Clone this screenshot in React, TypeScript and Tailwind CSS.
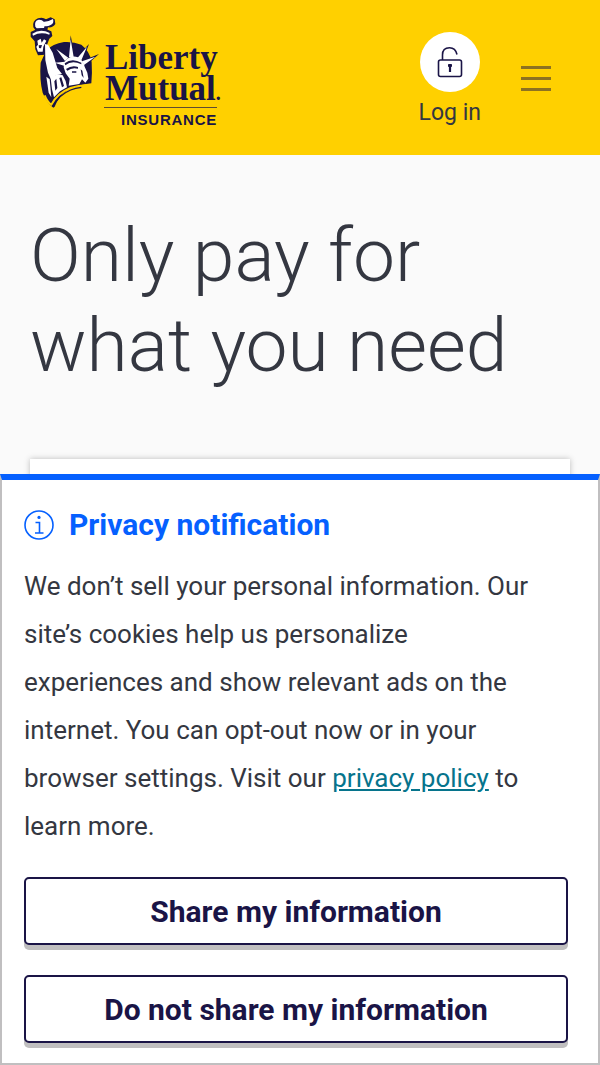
import React from 'react'

function StatueMark() {
  return (
    <svg viewBox="27 20 216 279" className="h-[93px] w-[72px] shrink-0" aria-hidden="true">
      {/* oval backdrop */}
      <path
        d="M78 124 Q98 103 132 98 Q160 96 184 106 Q210 126 215 158 Q217 190 214 222 Q172 226 142 243 Q116 262 104 292 L100 295 Q80 280 68 250 Q58 210 62 160 Z"
        fill="#1a1446"
      />
      {/* flame */}
      <path d="M40 54 Q36 34 54 27 Q68 22 78 30 L92 24 L104 30 L106 44 Q98 56 84 54 L82 62 L46 62 Z" fill="#1a1446" />
      <path d="M46 52 Q42 34 56 31 Q66 30 71 37 Q84 38 99 29 Q103 42 92 47 Q82 52 74 50 L72 56 L50 57 Z" fill="#fff" />
      {/* torch */}
      <path d="M32 68 Q62 48 94 66 L97 80 L88 88 L82 104 L76 136 L54 138 L46 120 L44 96 L32 82 Z" fill="#1a1446" />
      <path d="M37 73 Q62 56 89 71 L88 76 Q62 66 39 79 Z" fill="#fff" />
      <path d="M52 94 L62 88 L65 100 L72 90 L79 94 L70 112 L68 127 L54 127 L49 112 L54 106 Z" fill="#fff" />
      <path d="M56 108 L66 107 L63 117 L57 116 Z" fill="#1a1446" />
      {/* arm */}
      <path d="M75 104 L84 106 L98 130 L112 176 L126 194 L108 198 L92 208 L84 190 L76 152 Z" fill="#fff" />
      <path d="M79 202 L89 210 L94 264 L86 250 Z" fill="#fff" />
      {/* shoulder */}
      <path d="M92 206 Q108 190 128 198 Q140 216 141 234 L120 246 L102 264 L96 240 Z" fill="#fff" />
      <path d="M103 216 L109 208 L112 236 L106 244 Z M118 206 L124 204 L132 230 L126 234 Z" fill="#1a1446" />
      {/* crown rays */}
      <path d="M152 78 L165 146 L146 146 Z" fill="#1a1446" />
      <path d="M207 104 L187 158 L168 146 Z" fill="#1a1446" />
      <path d="M237 134 L194 172 L183 156 Z" fill="#1a1446" />
      <path
        d="M152 90 L161 143 L147 143 Z M109 119 L145 145 L135 155 Z M201 112 L184 153 L173 145 Z M226 142 L192 167 L186 156 Z M104 160 L136 157 L134 170 Z"
        fill="#fff"
      />
      {/* hair and face */}
      <path
        d="M133 158 Q150 136 174 144 Q190 154 194 172 L202 190 L205 208 L196 220 L186 210 L178 224 L146 229 L149 208 L137 192 L131 174 Z"
        fill="#fff"
      />
      <path
        d="M134 162 Q156 144 184 160 L184 165 Q156 151 136 168 Z M138 179 Q156 166 174 173 L174 178 Q156 173 142 184 Z M156 186 L169 186 L169 190 L156 190 Z M182 180 L187 184 L191 206 L185 198 Z"
        fill="#1a1446"
      />
      {/* robe trim */}
      <path d="M74 258 Q82 278 94 286 Q112 252 152 236 Q178 228 198 228" fill="none" stroke="#ffd000" strokeWidth="6" />
      <path d="M98 291 Q118 256 152 242 Q166 236 184 234" fill="none" stroke="#1a1446" strokeWidth="4" />
    </svg>
  )
}

function Logo() {
  return (
    <a href="#" aria-label="Liberty Mutual Insurance" className="flex items-start text-[#1a1446]">
      <StatueMark />
      <span className="mt-[26px] flex w-[120px] flex-col">
        <span className="pl-1 font-['Liberation_Serif',serif] text-[35px] font-bold leading-[31px]">Liberty</span>
        <span className="whitespace-nowrap pl-1 font-['Liberation_Serif',serif] text-[35px] font-bold leading-[31px]">
          Mutual<span className="text-xl">.</span>
        </span>
        <span className="ml-[3px] mr-1 border-t border-[#1a1446]/70" />
        <span className="mt-0.5 pr-1 text-right font-['Liberation_Sans',sans-serif] text-[15px] font-bold leading-5 tracking-wider">
          INSURANCE
        </span>
      </span>
    </a>
  )
}

function UnlockIcon() {
  return (
    <svg viewBox="0 0 26 32" className="h-8 w-[26px]" fill="none" stroke="#1a1446" strokeWidth="1.6" aria-hidden="true">
      <rect x="1.5" y="14" width="23" height="16.5" rx="2" />
      <path d="M5.5 14 V9 Q5.5 1.8 12.5 1.8 Q18.5 1.8 20 8.5" />
      <path d="M13 18 V26" strokeWidth="2.2" />
      <path d="M11 19.5 H15" strokeWidth="2.6" />
    </svg>
  )
}

function InfoIcon() {
  return (
    <svg viewBox="0 0 30 30" className="size-[30px] shrink-0" fill="none" stroke="#0560ff" strokeWidth="1.6" aria-hidden="true">
      <circle cx="15" cy="15" r="14" />
      <path d="M11.5 12.5 H15.5 V23 M11 23 H19.5" />
      <circle cx="15" cy="7.4" r="1.6" fill="#0560ff" stroke="none" />
    </svg>
  )
}

function Header() {
  return (
    <header className="flex h-[155px] items-start justify-between bg-[#ffd000] pl-[29px] pr-12 pt-4">
      <Logo />
      <div className="flex items-start gap-[39px] pt-4">
        <a href="#" className="flex flex-col items-center text-[#343741]">
          <span className="flex size-[60px] items-center justify-center rounded-full bg-white">
            <UnlockIcon />
          </span>
          <span className="mt-1 text-[23px] leading-[34px]">Log in</span>
        </a>
        <button type="button" aria-label="Menu" className="mt-[34px] flex w-[32px] flex-col gap-2 px-px">
          <span className="h-[3px] w-full bg-[#8d7221]" />
          <span className="h-[3px] w-full bg-[#8d7221]" />
          <span className="h-[3px] w-full bg-[#8d7221]" />
        </button>
      </div>
    </header>
  )
}

function ChoiceButton({ children }: { children: React.ReactNode }) {
  return (
    <button
      type="button"
      className="h-[68px] w-full rounded-[5px] border-2 border-[#1a1446] bg-white text-[30px] font-bold text-[#1a1446] shadow-[0_5px_0_#c0bfc0]"
    >
      {children}
    </button>
  )
}

function PrivacyBanner() {
  return (
    <section
      aria-labelledby="privacy-title"
      className="fixed inset-x-0 bottom-0 border-2 border-t-[6px] border-[#c0bfc0] border-t-[#0560ff] bg-white pb-5 pl-[22px] pr-[30px] pt-6"
    >
      <div className="flex items-center gap-[15px]">
        <InfoIcon />
        <h2 id="privacy-title" className="text-[30px] font-bold leading-[42px] text-[#0560ff]">
          Privacy notification
        </h2>
      </div>
      <p className="mt-4 pr-5 text-[26px] leading-[48px] text-[#343741]">
        We don’t sell your personal information. Our site’s cookies help us personalize experiences and show relevant
        ads on the internet. You can opt-out now or in your browser settings. Visit our{' '}
        <a href="#" className="text-[#06748c] underline">
          privacy policy
        </a>{' '}
        to learn more.
      </p>
      <div className="mt-[27px] flex flex-col gap-[30px]">
        <ChoiceButton>Share my information</ChoiceButton>
        <ChoiceButton>Do not share my information</ChoiceButton>
      </div>
    </section>
  )
}

export default function App() {
  return (
    <div className="min-h-screen bg-[#fafafa] font-[Roboto,sans-serif]">
      <Header />
      <main className="px-[30px] pt-[55px]">
        <h1 className="max-w-[500px] text-[75px] font-light leading-[90px] text-[#343741]">Only pay for what you need</h1>
        <div className="mt-[69px] h-40 bg-white shadow-[0_0_6px_rgba(0,0,0,0.25)]" />
      </main>
      <PrivacyBanner />
    </div>
  )
}
